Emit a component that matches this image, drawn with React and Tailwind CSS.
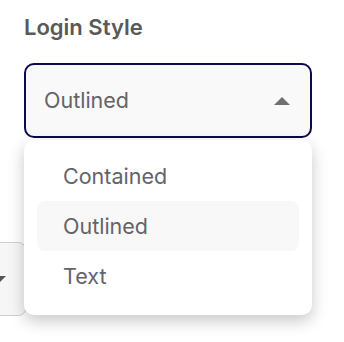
import React from "react";

const options = ["Contained", "Outlined", "Text"];

export default function App() {
  const selected = "Outlined";

  return (
    <div
      className="relative w-[344px] h-[342px] overflow-hidden bg-white"
      style={{ fontFamily: "Inter, 'Noto Sans', sans-serif" }}
    >
      <div className="px-6 pt-[13px]">
        <label className="block text-[22px] leading-[28px] font-semibold text-[#595959]">
          Login Style
        </label>
        <div className="mt-[22px] h-[75px] w-[288px] rounded-[10px] border-2 border-[#0a0a4c] bg-[#f9f9f9] flex items-center justify-between pl-[18px] pr-[20px]">
          <span className="text-[21.5px] text-[#636369]">{selected}</span>
          <svg width="16" height="8" viewBox="0 0 16 8">
            <path d="M0 8 L8 0 L16 8 Z" fill="#707070" />
          </svg>
        </div>
      </div>

      {/* field behind the open menu */}
      <div className="mt-[104px] ml-[-200px] h-[74px] w-[227px] rounded-[9px] border border-[#cfcfcf] bg-[#f6f6f6] flex items-center justify-end pr-[20px]">
        <svg width="14" height="7" viewBox="0 0 14 7">
          <path d="M0 0 L7 7 L14 0 Z" fill="#555" />
        </svg>
      </div>

      {/* open menu */}
      <div className="absolute left-[24px] top-[140px] w-[288px] h-[175px] rounded-[10px] bg-white shadow-[0_6px_16px_rgba(0,0,0,0.22)] px-[13px] pt-[11px]">
        {options.map((o) => (
          <div
            key={o}
            className={`h-[50px] flex items-center pl-[26px] rounded-[8px] text-[21.5px] text-[#636369] ${
              o === selected ? "bg-[#f8f8f8]" : ""
            }`}
          >
            {o}
          </div>
        ))}
      </div>
    </div>
  );
}
